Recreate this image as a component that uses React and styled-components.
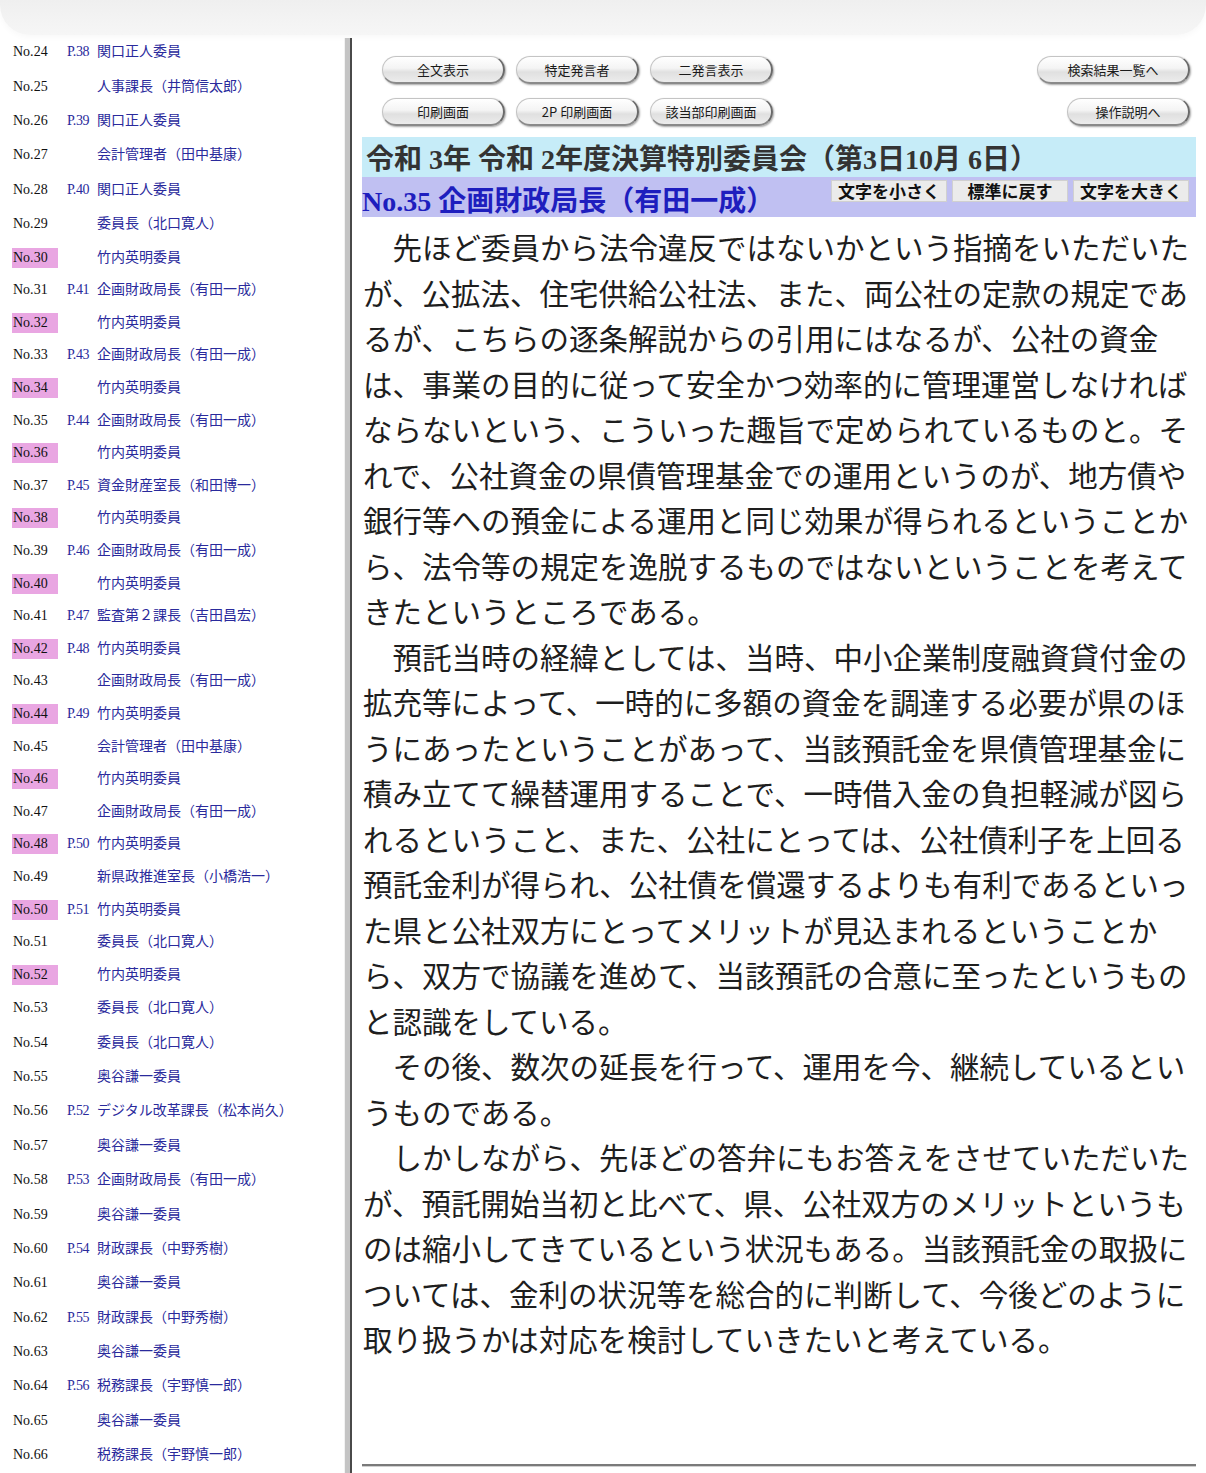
import React from "react";
import styled, { createGlobalStyle } from "styled-components";

const Global = createGlobalStyle`
  html, body { margin: 0; padding: 0; background: #fff; height: 1473px; overflow: hidden; }
  body { font-family: "Liberation Serif", "Noto Sans CJK JP", serif; }
`;

const Page = styled.div`
  width: 1206px;
  height: 1473px;
  display: flex;
  flex-direction: column;
  overflow: hidden;
`;

const TopBand = styled.div`
  height: 35px;
  flex: none;
  background: linear-gradient(#efefef, #f6f6f6);
  border-bottom-left-radius: 30px;
  border-bottom-right-radius: 30px;
  box-shadow: 0 2px 6px rgba(0, 0, 0, 0.03);
`;

const Frames = styled.div`
  flex: 1;
  display: flex;
  min-height: 0;
`;

const LeftPane = styled.div`
  width: 344px;
  flex: none;
  display: flex;
  flex-direction: column;
`;

const Row = styled.div`
  height: ${(p) => (p.$tight ? "32.6px" : "34.4px")};
  flex: none;
  display: flex;
  align-items: center;
  font-size: 14px;
  line-height: 20px;
`;

const NoCell = styled.div`
  width: 67px;
  padding-left: 12px;
  flex: none;
  box-sizing: border-box;
`;

const NoLabel = styled.span`
  display: inline-block;
  width: 46px;
  height: 20px;
  padding-left: 1px;
  box-sizing: border-box;
  color: #111;
  background: ${(p) => (p.$hl ? "#e9a6e2" : "transparent")};
`;

const PageCell = styled.div`
  width: 30px;
  flex: none;
  color: #2a2a9c;
  font-size: 14px;
  letter-spacing: -0.4px;
`;

const NameCell = styled.div`
  color: #2a2a9c;
  white-space: nowrap;
  font-size: 14px;
`;

const Divider = styled.div`
  width: 8px;
  flex: none;
  margin-top: 3px;
  box-sizing: border-box;
  border-left: 1px solid #f2f2f2;
  background: #c4c4c4;
  border-right: 2px solid #4a4a4a;
`;

const RightPane = styled.div`
  flex: 1;
  padding: 21px 10px 0 10px;
  display: flex;
  flex-direction: column;
`;

const ButtonArea = styled.div`
  padding: 0 6px 0 20px;
  display: flex;
  flex-direction: column;
  gap: 14px;
`;

const ButtonRow = styled.div`
  display: flex;
  align-items: center;
  gap: 11px;
`;

const Spacer = styled.div`
  flex: 1;
`;

const Pill = styled.button`
  width: ${(p) => p.$w || 123}px;
  height: 28px;
  padding: 0;
  border: 1px solid #c4c4c4;
  border-right: 2px solid #6a6a6a;
  border-bottom: 2px solid #8a8a8a;
  border-radius: 14px;
  background: linear-gradient(#ffffff 0%, #f4f4f4 45%, #e0e0e0 60%, #ececec 100%);
  box-shadow: 1px 1px 2px rgba(0, 0, 0, 0.35);
  font-family: "Noto Sans CJK JP", sans-serif;
  font-size: 13px;
  color: #1a1a1a;
  display: flex;
  align-items: center;
  justify-content: center;
  box-sizing: border-box;
`;

const TitleBar = styled.div`
  margin-top: 11px;
  height: 40px;
  background: #c6ecf8;
  display: flex;
  align-items: center;
  padding-left: 4px;
  font-family: "Liberation Serif", "Noto Sans CJK JP", serif;
  font-weight: 700;
  font-size: 28px;
  color: #333;
  white-space: nowrap;
`;

const SpeakerBar = styled.div`
  height: 40px;
  background: #c0c0f2;
  display: flex;
  justify-content: space-between;
  align-items: flex-start;
`;

const SpeakerName = styled.div`
  align-self: center;
  padding-top: 4px;
  font-family: "Liberation Serif", "Noto Sans CJK JP", serif;
  font-weight: 700;
  font-size: 28px;
  color: #1e1ebe;
  white-space: nowrap;
`;

const SizeButtons = styled.div`
  display: flex;
  gap: 5px;
  padding-top: 3px;
  padding-right: 7px;
`;

const SizeButton = styled.button`
  width: 116px;
  height: 22px;
  padding: 0;
  border: 1px solid #d0d0d0;
  background: #ebebeb;
  font-family: "Noto Sans CJK JP", sans-serif;
  font-weight: 700;
  font-size: 17px;
  line-height: 20px;
  color: #111;
  white-space: nowrap;
`;

const Body = styled.div`
  padding-top: 7px;
  padding-left: 1px;
  font-family: "Noto Sans CJK JP", sans-serif;
  font-size: 29.5px;
  line-height: 45.5px;
  color: #1e1e1e;
  width: calc(28em + 2px);
`;

const Para = styled.p`
  margin: 0;
`;

const Rule = styled.div`
  margin-top: 102px;
  height: 0;
  border-top: 2px solid #7a7a7a;
  border-bottom: 1px solid #d0d0d0;
`;

const items = [
  [24, "P.38", "関口正人委員"],
  [25, "", "人事課長（井筒信太郎）"],
  [26, "P.39", "関口正人委員"],
  [27, "", "会計管理者（田中基康）"],
  [28, "P.40", "関口正人委員"],
  [29, "", "委員長（北口寛人）"],
  [30, "", "竹内英明委員"],
  [31, "P.41", "企画財政局長（有田一成）"],
  [32, "", "竹内英明委員"],
  [33, "P.43", "企画財政局長（有田一成）"],
  [34, "", "竹内英明委員"],
  [35, "P.44", "企画財政局長（有田一成）"],
  [36, "", "竹内英明委員"],
  [37, "P.45", "資金財産室長（和田博一）"],
  [38, "", "竹内英明委員"],
  [39, "P.46", "企画財政局長（有田一成）"],
  [40, "", "竹内英明委員"],
  [41, "P.47", "監査第２課長（吉田昌宏）"],
  [42, "P.48", "竹内英明委員"],
  [43, "", "企画財政局長（有田一成）"],
  [44, "P.49", "竹内英明委員"],
  [45, "", "会計管理者（田中基康）"],
  [46, "", "竹内英明委員"],
  [47, "", "企画財政局長（有田一成）"],
  [48, "P.50", "竹内英明委員"],
  [49, "", "新県政推進室長（小橋浩一）"],
  [50, "P.51", "竹内英明委員"],
  [51, "", "委員長（北口寛人）"],
  [52, "", "竹内英明委員"],
  [53, "", "委員長（北口寛人）"],
  [54, "", "委員長（北口寛人）"],
  [55, "", "奥谷謙一委員"],
  [56, "P.52", "デジタル改革課長（松本尚久）"],
  [57, "", "奥谷謙一委員"],
  [58, "P.53", "企画財政局長（有田一成）"],
  [59, "", "奥谷謙一委員"],
  [60, "P.54", "財政課長（中野秀樹）"],
  [61, "", "奥谷謙一委員"],
  [62, "P.55", "財政課長（中野秀樹）"],
  [63, "", "奥谷謙一委員"],
  [64, "P.56", "税務課長（宇野慎一郎）"],
  [65, "", "奥谷謙一委員"],
  [66, "", "税務課長（宇野慎一郎）"],
];

const paragraphs = [
  "　先ほど委員から法令違反ではないかという指摘をいただいたが、公拡法、住宅供給公社法、また、両公社の定款の規定であるが、こちらの逐条解説からの引用にはなるが、公社の資金は、事業の目的に従って安全かつ効率的に管理運営しなければならないという、こういった趣旨で定められているものと。それで、公社資金の県債管理基金での運用というのが、地方債や銀行等への預金による運用と同じ効果が得られるということから、法令等の規定を逸脱するものではないということを考えてきたというところである。",
  "　預託当時の経緯としては、当時、中小企業制度融資貸付金の拡充等によって、一時的に多額の資金を調達する必要が県のほうにあったということがあって、当該預託金を県債管理基金に積み立てて繰替運用することで、一時借入金の負担軽減が図られるということ、また、公社にとっては、公社債利子を上回る預託金利が得られ、公社債を償還するよりも有利であるといった県と公社双方にとってメリットが見込まれるということから、双方で協議を進めて、当該預託の合意に至ったというものと認識をしている。",
  "　その後、数次の延長を行って、運用を今、継続しているというものである。",
  "　しかしながら、先ほどの答弁にもお答えをさせていただいたが、預託開始当初と比べて、県、公社双方のメリットというものは縮小してきているという状況もある。当該預託金の取扱については、金利の状況等を総合的に判断して、今後どのように取り扱うかは対応を検討していきたいと考えている。",
];

export default function App() {
  return (
    <Page>
      <Global />
      <TopBand />
      <Frames>
        <LeftPane>
          {items.map(([n, p, name]) => {
            const hl = n >= 30 && n <= 52 && n % 2 === 0;
            return (
              <Row key={n} $tight={n >= 30 && n <= 52}>
                <NoCell>
                  <NoLabel $hl={hl}>No.{n}</NoLabel>
                </NoCell>
                <PageCell>{p}</PageCell>
                <NameCell>{name}</NameCell>
              </Row>
            );
          })}
        </LeftPane>
        <Divider />
        <RightPane>
          <ButtonArea>
            <ButtonRow>
              <Pill>全文表示</Pill>
              <Pill>特定発言者</Pill>
              <Pill>二発言表示</Pill>
              <Spacer />
              <Pill $w={153}>検索結果一覧へ</Pill>
            </ButtonRow>
            <ButtonRow>
              <Pill>印刷画面</Pill>
              <Pill>2P 印刷画面</Pill>
              <Pill>該当部印刷画面</Pill>
              <Spacer />
              <Pill>操作説明へ</Pill>
            </ButtonRow>
          </ButtonArea>
          <TitleBar>令和 3年 令和 2年度決算特別委員会（第3日10月 6日）</TitleBar>
          <SpeakerBar>
            <SpeakerName>No.35 企画財政局長（有田一成）</SpeakerName>
            <SizeButtons>
              <SizeButton>文字を小さく</SizeButton>
              <SizeButton>標準に戻す</SizeButton>
              <SizeButton>文字を大きく</SizeButton>
            </SizeButtons>
          </SpeakerBar>
          <Body>
            {paragraphs.map((t, i) => (
              <Para key={i}>{t}</Para>
            ))}
          </Body>
          <Rule />
        </RightPane>
      </Frames>
    </Page>
  );
}
